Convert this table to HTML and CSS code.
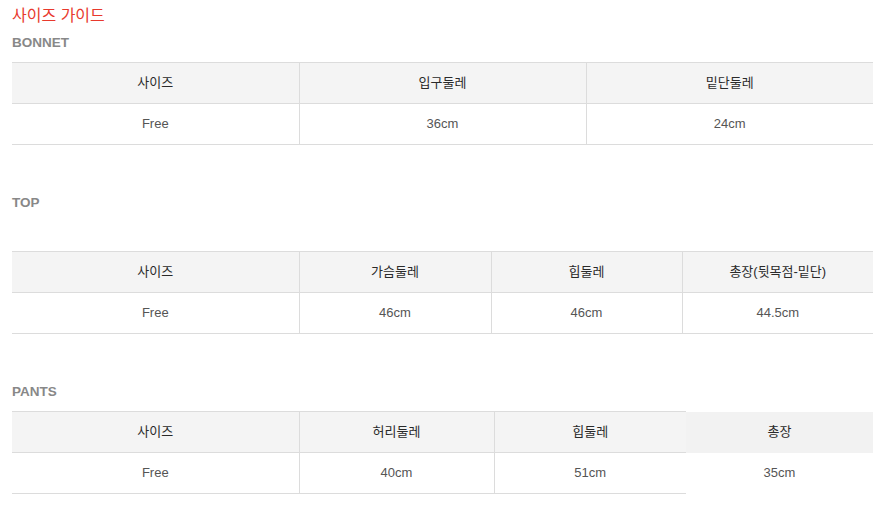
FILE: index.html
```html
<!DOCTYPE html>
<html lang="ko">
<head>
<meta charset="utf-8">
<title>사이즈 가이드</title>
<link rel="stylesheet" href="styles.css">
</head>
<body>
<div class="guide">
  <h2 class="title">사이즈 가이드</h2>

  <section class="block block-first">
    <h3 class="label">BONNET</h3>
    <table class="size-table">
      <colgroup><col class="c1"><col class="c-b2"><col class="c-b3"></colgroup>
      <thead>
        <tr><th>사이즈</th><th>입구둘레</th><th>밑단둘레</th></tr>
      </thead>
      <tbody>
        <tr><td>Free</td><td>36cm</td><td>24cm</td></tr>
      </tbody>
    </table>
  </section>

  <section class="block block-spaced">
    <h3 class="label">TOP</h3>
    <table class="size-table">
      <colgroup><col class="c1"><col class="c-t2"><col class="c-t3"><col class="c-t4"></colgroup>
      <thead>
        <tr><th>사이즈</th><th>가슴둘레</th><th>힙둘레</th><th>총장(뒷목점-밑단)</th></tr>
      </thead>
      <tbody>
        <tr><td>Free</td><td>46cm</td><td>46cm</td><td>44.5cm</td></tr>
      </tbody>
    </table>
  </section>

  <section class="block">
    <h3 class="label">PANTS</h3>
    <table class="size-table">
      <colgroup><col class="c1"><col class="c-p2"><col class="c-p3"><col class="c-p4"></colgroup>
      <thead>
        <tr><th>사이즈</th><th>허리둘레</th><th>힙둘레</th><th class="plain">총장</th></tr>
      </thead>
      <tbody>
        <tr><td>Free</td><td>40cm</td><td>51cm</td><td class="plain">35cm</td></tr>
      </tbody>
    </table>
  </section>
</div>
</body>
</html>
```

FILE: styles.css
```css
* { box-sizing: border-box; }

body {
  margin: 0;
  background: #fff;
  font-family: "Liberation Sans", "Noto Sans CJK KR", sans-serif;
}

.guide {
  padding: 4px 5px 0 12px;
  width: 878px;
}

.title {
  margin: 0;
  font-size: 16px;
  line-height: 20px;
  font-weight: normal;
  color: #e8392d;
  font-family: "Noto Sans CJK KR", sans-serif;
}

.block { margin-top: 49px; }
.block-first { margin-top: 10px; }

.label {
  margin: 0 0 10px;
  font-size: 13.5px;
  line-height: 18px;
  font-weight: bold;
  color: #888;
}

.block-spaced .label { margin-bottom: 39px; }

.size-table {
  width: 861px;
  table-layout: fixed;
  border-collapse: collapse;
  font-size: 13px;
}

.c1 { width: 287px; }
.c-b2 { width: 287px; }
.c-b3 { width: 287px; }
.c-t2 { width: 192px; }
.c-t3 { width: 191px; }
.c-t4 { width: 191px; }
.c-p2 { width: 195px; }
.c-p3 { width: 192px; }
.c-p4 { width: 187px; }

.size-table th,
.size-table td {
  height: 41px;
  padding: 0;
  text-align: center;
  vertical-align: middle;
  border: 1px solid #dcdcdc;
  line-height: 16px;
}

.size-table tr > :first-child { border-left: none; }
.size-table tr > :last-child { border-right: none; }

.size-table th {
  background: #f4f4f4;
  color: #2a2a2a;
  font-weight: normal;
}

.size-table td {
  color: #555;
}

.size-table .plain {
  border-style: hidden;
}

.size-table th.plain { background: #f2f2f2; }
```
